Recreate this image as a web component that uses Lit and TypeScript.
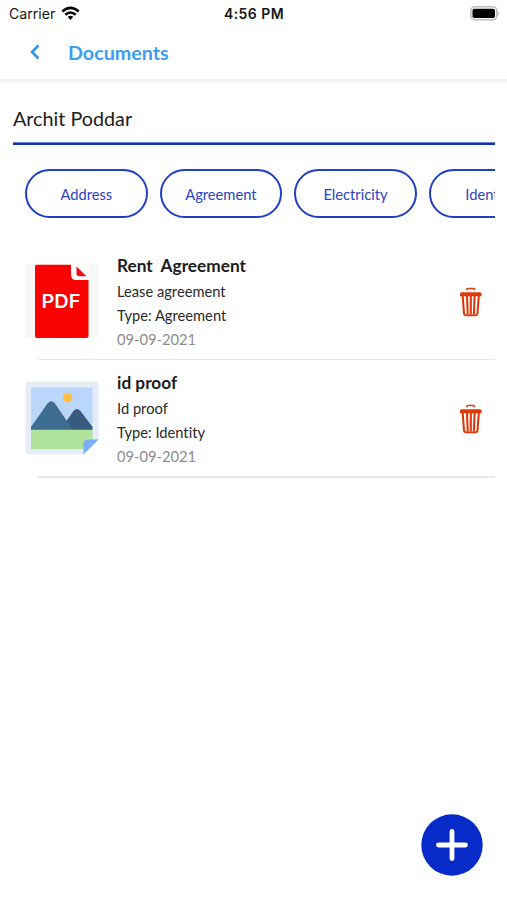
import { LitElement, html, css } from "lit";
import { customElement, property } from "lit/decorators.js";

const pdfIcon = html`<svg width="74" height="74" viewBox="0 0 74 74">
  <rect width="74" height="74" fill="#f8f8f8" />
  <path d="M11.500.8H46V11Q46 16 51 16H63.500V72Q63.500 74 61.500 74H12Q10 74 10 72V2.500Q10 .8 11.500.8Z" fill="#fa0202" />
  <path d="M48 0H64V15.500H53.500Q48 15.500 48 10Z" fill="#fff" />
  <path d="M51.500 2.500L61.500 12.300H54.500Q51.500 12.300 51.500 9.500Z" fill="#ea0d14" />
  <text x="16.500" y="44" class="pdf" textLength="39" lengthAdjust="spacingAndGlyphs">PDF</text>
</svg>`;

const photoIcon = html`<svg width="74" height="74" viewBox="0 0 74 74">
  <path d="M5 .5H69Q73.500.5 73.500 5V59L58.500 73.500H5Q.5 73.500.5 69V5Q.5.500 5 .5Z" fill="#e5ebf7" />
  <path d="M6 6.500H67.500V49H6Z" fill="#bbd6fb" />
  <circle cx="42.500" cy="16.500" r="4.800" fill="#fdbf45" />
  <path d="M40 42L48.500 30Q52 26 55.500 30L67.500 46V49H40Z" fill="#365b7c" />
  <path d="M6 46L22.500 22.500Q26.300 18 30 22.500L48 49H6Z" fill="#3d6d91" />
  <path d="M6 48.700H67.500V59L58 68H6Z" fill="#b0e39c" />
  <path d="M58.500 73.500V63Q58.500 58.500 63 58.500H73.500Z" fill="#7baefa" />
</svg>`;

const trashIcon = html`<svg width="24" height="30" viewBox="0 0 24 30">
  <path d="M8 3.300V2.500Q8 1.500 9 1.500H14.500Q15.500 1.500 15.500 2.500V3.300" fill="none" stroke="#dc3e12" stroke-width="1.700" />
  <path d="M2.500 5.200H21Q22.500 5.200 22.500 6.700V9.300H1V6.700Q1 5.200 2.500 5.200Z" fill="#dc3a0c" />
  <path d="M3.700 9L5 26.500Q5.200 28.200 6.700 28.200H16.800Q18.300 28.200 18.500 26.500L19.800 9" fill="none" stroke="#dc3a0c" stroke-width="2.100" />
  <path d="M8 9L8.700 27M11.800 9V27M15.600 9L14.900 27" stroke="#dc3a0c" stroke-width="2.100" />
</svg>`;

@customElement("document-row")
export class DocumentRow extends LitElement {
  @property() heading = "";
  @property() description = "";
  @property() kind = "";
  @property() date = "";
  @property() icon = "pdf";

  static styles = css`
    :host { display: block; }
    .row { display: flex; height: 116px; padding-left: 12px; box-sizing: border-box; }
    .thumb { width: 74px; height: 74px; margin-top: 21px; flex: none; }
    svg { display: block; }
    .pdf { font-family: Inter, "Liberation Sans", sans-serif; font-weight: 600; font-size: 19px; fill: #fff; }
    .info { margin: 9px 0 0 18px; flex: 1; color: #2a2a2a; font-size: 14.700px; line-height: 24px; white-space: pre; font-variant-ligatures: none; }
    .heading { font-size: 17.250px; font-weight: 700; line-height: 27px; color: #1c1c1c; }
    .date { color: #8c8c8c; }
    .trash { margin: 44px 12px 0 0; flex: none; }
    .line { height: 1.300px; margin-left: 25px; background: #e9e9e9; }
  `;

  render() {
    return html`<div class="row">
        <div class="thumb">${this.icon === "pdf" ? pdfIcon : photoIcon}</div>
        <div class="info"><div class="heading">${this.heading}</div><div>${this.description}</div><div>Type: ${this.kind}</div><div class="date">${this.date}</div></div>
        <div class="trash">${trashIcon}</div>
      </div>
      <div class="line"></div>`;
  }
}

@customElement("app-root")
export class AppRoot extends LitElement {
  static styles = css`
    :host { display: block; position: relative; width: 507px; height: 900px; overflow: hidden; background: #fff; font-family: Lato, sans-serif; }
    svg { display: block; }
    .status { display: grid; grid-template-columns: 1fr auto 1fr; align-items: center; height: 27px; padding: 0 8px 0 9px; font: 14px/27px Inter, sans-serif; color: #161616; }
    .carrier { display: flex; align-items: center; gap: 6px; font-size: 14.100px; }
    .time { font-weight: 600; letter-spacing: .45px; }
    .battery { justify-self: end; }
    .nav { display: flex; align-items: center; height: 52px; padding: 0 0 2px 29px; box-sizing: border-box; }
    .title { margin-left: 28px; font-size: 19.700px; font-weight: 700; color: #3d9df0; }
    .rule { height: 3px; background: #f3f3f3; }
    .body { margin: 0 12px 0 13px; }
    .name { height: 60px; box-sizing: border-box; padding-top: 24px; font-size: 19.750px; line-height: 26px; color: #1c1c1c; }
    .underline { height: 3px; background: linear-gradient(#6c80d6 0 1px, #1531b5 1px); }
    .chips { display: flex; gap: 12px; margin-top: 24px; padding-left: 12px; overflow: hidden; }
    .chip { flex: none; width: 122.600px; height: 49px; box-sizing: border-box; border: 2px solid #203fc4; border-radius: 25px; text-align: center; font-size: 14.700px; line-height: 47px; color: #2a43c4; font-variant-ligatures: none; }
    .list { margin: 25px 12px 0 13px; }
    .add { position: absolute; left: 421px; top: 814px; }
  `;

  render() {
    return html`
      <div class="status">
        <div class="carrier"><span>Carrier</span>
          <svg width="19" height="15" viewBox="0 0 19 15" fill="none" stroke="#000" stroke-width="2.600">
            <path d="M1.300 5.500Q9.500 -1.700 17.700 5.500" /><path d="M4.300 8.800Q9.500 4.200 14.700 8.800" />
            <path d="M6.700 10.800Q9.500 8.700 12.300 10.800L9.500 14Z" fill="#000" stroke="none" />
          </svg>
        </div>
        <span class="time">4:56 PM</span>
        <svg class="battery" width="30" height="15" viewBox="0 0 30 15">
          <rect x="1.800" y=".8" width="26" height="13" rx="4" fill="#fff" stroke="#bdbdbd" stroke-width="1.600" />
          <rect x="3.500" y="2.700" width="22.500" height="9.300" rx="1.800" fill="#000" />
          <path d="M28.800 5Q31 7.300 28.800 9.700Z" fill="#b5b5b5" />
        </svg>
      </div>
      <div class="nav">
        <svg width="11" height="16" viewBox="0 0 11 16"><path d="M9.500 1.500L3 8L9.500 14.500" fill="none" stroke="#2f93f0" stroke-width="2.500" /></svg>
        <span class="title">Documents</span>
      </div>
      <div class="rule"></div>
      <div class="body">
        <div class="name">Archit Poddar</div>
        <div class="underline"></div>
        <div class="chips">${["Address", "Agreement", "Electricity", "Identity"].map((c) => html`<div class="chip">${c}</div>`)}</div>
      </div>
      <div class="list">
        <document-row heading="Rent  Agreement" description="Lease agreement" kind="Agreement" date="09-09-2021" icon="pdf"></document-row>
        <document-row heading="id proof" description="Id proof" kind="Identity" date="09-09-2021" icon="photo"></document-row>
      </div>
      <svg class="add" width="62" height="62" viewBox="0 0 62 62">
        <circle cx="31" cy="31" r="30.700" fill="#062bc8" />
        <path d="M31 17.500V44.500M17.500 31H44.500" stroke="#fff" stroke-width="4.800" stroke-linecap="round" />
      </svg>`;
  }
}
